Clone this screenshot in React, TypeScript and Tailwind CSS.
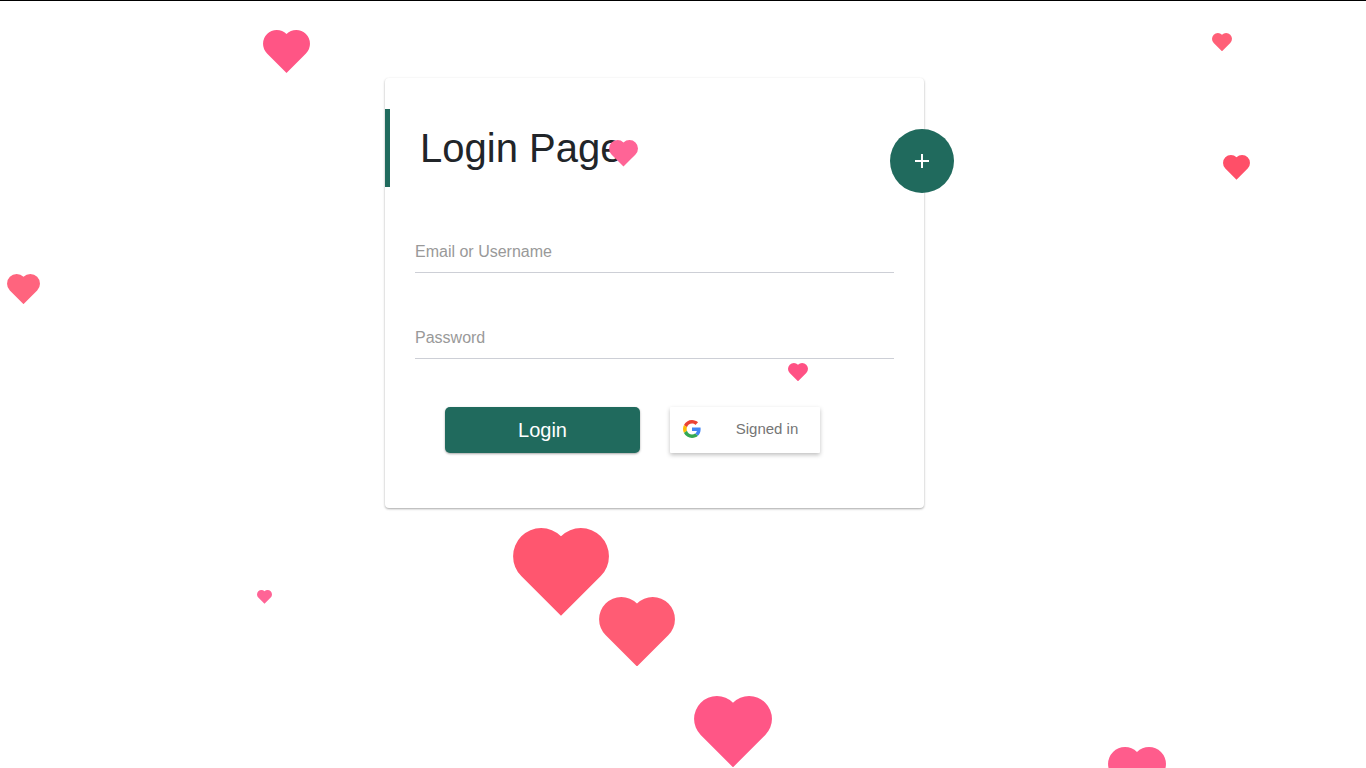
import { FormEvent } from "react";

type HeartSpec = { left: number; top: number; width: number; color: string };

const hearts: HeartSpec[] = [
  { left: 263, top: 30, width: 47, color: "#ff5585" },
  { left: 1212, top: 33, width: 20, color: "#ff5f77" },
  { left: 1223, top: 155, width: 27, color: "#ff4f68" },
  { left: 609, top: 140, width: 29, color: "#ff6496" },
  { left: 7, top: 274, width: 33, color: "#ff647e" },
  { left: 788, top: 363, width: 20, color: "#ff5184" },
  { left: 513, top: 528, width: 96, color: "#ff566f" },
  { left: 599, top: 597, width: 76, color: "#ff5c74" },
  { left: 694, top: 696, width: 78, color: "#ff5686" },
  { left: 1108, top: 747, width: 58, color: "#ff5c8c" },
  { left: 257, top: 590, width: 15, color: "#ff6496" },
];

function Heart({ left, top, width, color }: HeartSpec) {
  return (
    <svg
      viewBox="0 0 170.71 156.07"
      className="absolute"
      style={{ left, top, width, fill: color }}
    >
      <path d="M85.355 156.066 14.645 85.355A50 50 0 0 1 85.355 14.645 50 50 0 0 1 156.066 85.355Z" />
    </svg>
  );
}

function GoogleLogo() {
  return (
    <svg viewBox="0 0 48 48" className="size-[18px]" aria-hidden="true">
      <path fill="#EA4335" d="M24 9.5c3.54 0 6.71 1.22 9.21 3.6l6.85-6.85C35.9 2.38 30.47 0 24 0 14.62 0 6.51 5.38 2.56 13.22l7.98 6.19C12.43 13.72 17.74 9.5 24 9.5z" />
      <path fill="#4285F4" d="M46.98 24.55c0-1.57-.15-3.09-.38-4.55H24v9.02h12.94c-.58 2.96-2.26 5.48-4.78 7.18l7.73 6c4.51-4.18 7.09-10.36 7.09-17.65z" />
      <path fill="#FBBC05" d="M10.53 28.59c-.48-1.45-.76-2.99-.76-4.59s.27-3.14.76-4.59l-7.98-6.19C.92 16.46 0 20.12 0 24c0 3.88.92 7.54 2.56 10.78l7.97-6.19z" />
      <path fill="#34A853" d="M24 48c6.48 0 11.93-2.13 15.89-5.81l-7.73-6c-2.15 1.45-4.92 2.3-8.16 2.3-6.26 0-11.57-4.22-13.47-9.91l-7.98 6.19C6.51 42.62 14.62 48 24 48z" />
    </svg>
  );
}

/* Text field whose label rests over the empty input and lifts on focus or when filled. */
function Field({ id, type, label }: { id: string; type: string; label: string }) {
  return (
    <div className="relative">
      <input
        id={id}
        type={type}
        placeholder=" "
        className="peer block h-[43px] w-full border-b border-[#cdcfd6] bg-transparent text-base text-[#212529] outline-none"
      />
      <label
        htmlFor={id}
        className="pointer-events-none absolute -top-5 left-0 text-base leading-6 text-[#206a5d] peer-placeholder-shown:top-2.5 peer-placeholder-shown:text-[#999] peer-focus:-top-5"
      >
        {label}
      </label>
    </div>
  );
}

export default function App() {
  const submit = (e: FormEvent) => e.preventDefault();

  return (
    <div className="relative min-h-screen overflow-hidden border-t border-black bg-white font-['Liberation_Sans',Arial,sans-serif]">
      <main className="flex justify-center pt-[77px] pr-[57px]">
        <section className="relative w-full max-w-[539px] rounded-[4px] bg-white pt-[31px] pb-[55px] shadow-[0_1px_3px_rgba(0,0,0,0.12),0_1px_2px_rgba(0,0,0,0.24)]">
          <h1 className="flex h-[78px] items-center border-l-5 border-[#206a5d] pl-[30px] text-[40px] leading-[48px] text-[#212529]">
            Login Page
          </h1>
          <button
            type="button"
            aria-label="Register"
            className="absolute top-[51px] -right-[30px] flex size-16 items-center justify-center rounded-full bg-[#206a5d] text-white"
          >
            <svg viewBox="0 0 14 14" className="size-[14px]" fill="currentColor" aria-hidden="true">
              <path d="M6 0h2v6h6v2H8v6H6V8H0V6h6z" />
            </svg>
          </button>
          <form onSubmit={submit} className="mt-[43px] px-[30px]">
            <div className="flex flex-col gap-[43px]">
              <Field id="username" type="text" label="Email or Username" />
              <Field id="password" type="password" label="Password" />
            </div>
            <div className="mt-12 flex gap-[30px] px-[30px]">
              <button
                type="submit"
                className="h-[46px] w-[195px] rounded-[5px] bg-[#206a5d] text-xl text-white shadow-[0_1px_3px_rgba(0,0,0,0.12),0_1px_2px_rgba(0,0,0,0.24)]"
              >
                Login
              </button>
              <button
                type="button"
                className="flex h-[46px] w-[150px] items-center rounded-[1px] bg-white pb-[2px] pl-[13px] text-[#757575] shadow-[0_2px_4px_rgba(0,0,0,0.25)]"
              >
                <GoogleLogo />
                <span className="flex-1 pl-[13px] text-center text-[15px]">Signed in</span>
              </button>
            </div>
          </form>
        </section>
      </main>
      <div className="pointer-events-none absolute inset-x-0 -top-px bottom-0" aria-hidden="true">
        {hearts.map((heart) => (
          <Heart key={`${heart.left}-${heart.top}`} {...heart} />
        ))}
      </div>
    </div>
  );
}
